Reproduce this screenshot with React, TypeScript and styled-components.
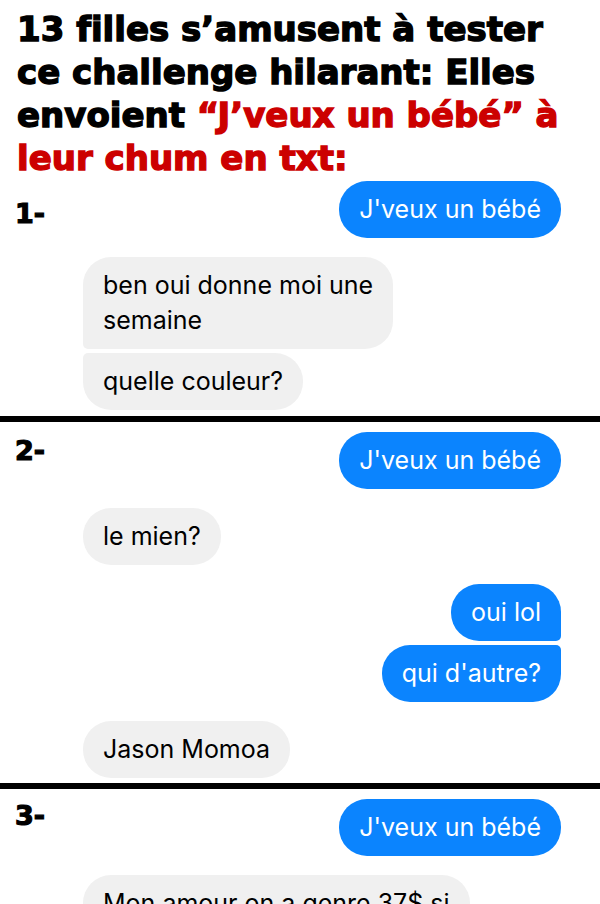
import React from "react";
import styled, { createGlobalStyle, css } from "styled-components";

const Global = createGlobalStyle`
  html, body {
    margin: 0;
    padding: 0;
    background: #ffffff;
    overflow: hidden;
  }
`;

const Page = styled.div`
  width: 600px;
  height: 904px;
  overflow: hidden;
  background: #ffffff;
  display: flex;
  flex-direction: column;
`;

const Title = styled.h1`
  margin: 0;
  padding: 8px 0 0 17px;
  font-family: "DejaVu Sans", "Liberation Sans", sans-serif;
  font-weight: 700;
  font-size: 34px;
  line-height: 43px;
  color: #000000;
  white-space: nowrap;
  font-variant-ligatures: none;
  -webkit-text-stroke: 1.4px currentColor;
`;

const Red = styled.span`
  color: #cc0000;
`;

const Section = styled.section<{ $top: number }>`
  display: flex;
  flex-direction: column;
  gap: 19px;
  padding: ${(p) => p.$top}px 39px 0 15px;
`;

const Header = styled.div`
  display: flex;
  justify-content: space-between;
  align-items: flex-start;
`;

const Label = styled.div<{ $offset: number }>`
  margin-top: ${(p) => p.$offset}px;
  font-family: "DejaVu Sans", "Liberation Sans", sans-serif;
  font-weight: 700;
  font-size: 27px;
  line-height: 29px;
  color: #000000;
  -webkit-text-stroke: 1.2px currentColor;
`;

const Group = styled.div<{ $side: "in" | "out" }>`
  display: flex;
  flex-direction: column;
  gap: 4px;
  align-items: ${(p) => (p.$side === "in" ? "flex-start" : "flex-end")};
  padding-left: ${(p) => (p.$side === "in" ? "68px" : "0")};
`;

type Pos = "single" | "first" | "last";

const BIG = 28;
const SMALL = 5;

const radius = (side: "in" | "out", pos: Pos) => {
  if (pos === "single") return css`border-radius: ${BIG}px;`;
  if (side === "in") {
    return pos === "first"
      ? css`border-radius: ${BIG}px ${BIG}px ${BIG}px ${SMALL}px;`
      : css`border-radius: ${SMALL}px ${BIG}px ${BIG}px ${BIG}px;`;
  }
  return pos === "first"
    ? css`border-radius: ${BIG}px ${BIG}px ${SMALL}px ${BIG}px;`
    : css`border-radius: ${BIG}px ${SMALL}px ${BIG}px ${BIG}px;`;
};

const Bubble = styled.div<{ $side: "in" | "out"; $pos?: Pos }>`
  box-sizing: border-box;
  padding: 11px 20px;
  font-family: "Inter", "Liberation Sans", sans-serif;
  font-weight: 400;
  font-size: 25px;
  line-height: 35px;
  white-space: nowrap;
  background: ${(p) => (p.$side === "in" ? "#f0f0f0" : "#0b84fe")};
  color: ${(p) => (p.$side === "in" ? "#000000" : "#ffffff")};
  ${(p) => radius(p.$side, p.$pos ?? "single")}
`;

const Divider = styled.hr<{ $gap: number }>`
  margin: ${(p) => p.$gap}px 0 0 0;
  border: none;
  height: 6px;
  width: 600px;
  background: #000000;
  flex-shrink: 0;
`;

export default function App() {
  return (
    <>
      <Global />
      <Page>
        <Title>
          13 filles s’amusent à tester
          <br />
          ce challenge hilarant: Elles
          <br />
          envoient <Red>“J’veux un bébé” à</Red>
          <br />
          <Red>leur chum en txt:</Red>
        </Title>

        <Section $top={1}>
          <Header>
            <Label $offset={18}>1-</Label>
            <Bubble $side="out">J'veux un bébé</Bubble>
          </Header>
          <Group $side="in">
            <Bubble $side="in" $pos="first">
              ben oui donne moi une
              <br />
              semaine
            </Bubble>
            <Bubble $side="in" $pos="last">quelle couleur?</Bubble>
          </Group>
        </Section>

        <Divider $gap={6} />

        <Section $top={10}>
          <Header>
            <Label $offset={4}>2-</Label>
            <Bubble $side="out">J'veux un bébé</Bubble>
          </Header>
          <Group $side="in">
            <Bubble $side="in">le mien?</Bubble>
          </Group>
          <Group $side="out">
            <Bubble $side="out" $pos="first">oui lol</Bubble>
            <Bubble $side="out" $pos="last">qui d'autre?</Bubble>
          </Group>
          <Group $side="in">
            <Bubble $side="in">Jason Momoa</Bubble>
          </Group>
        </Section>

        <Divider $gap={5} />

        <Section $top={10}>
          <Header>
            <Label $offset={2}>3-</Label>
            <Bubble $side="out">J'veux un bébé</Bubble>
          </Header>
          <Group $side="in">
            <Bubble $side="in" $pos="first">
              Mon amour on a genre 37$ si
            </Bubble>
          </Group>
        </Section>
      </Page>
    </>
  );
}
